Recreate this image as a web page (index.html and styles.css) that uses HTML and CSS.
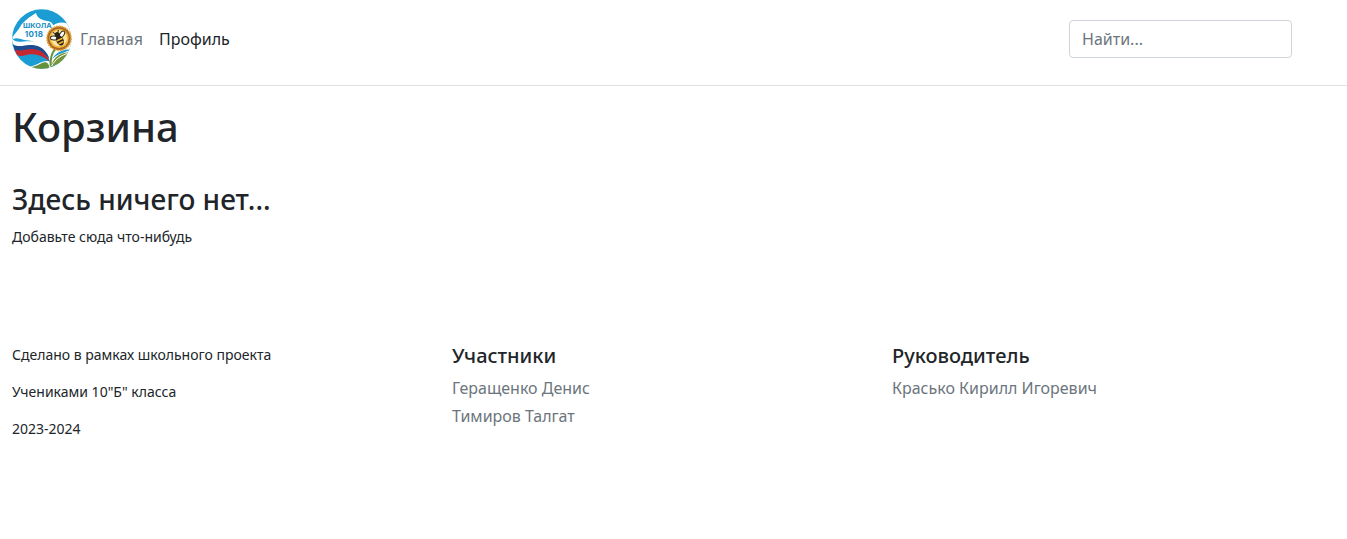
FILE: index.html
```html
<!DOCTYPE html>
<html lang="ru">
<head>
<meta charset="utf-8">
<title>Корзина</title>
<link rel="stylesheet" href="styles.css">
</head>
<body>
<header class="header">
  <a class="brand" href="#">
    <svg class="logo" viewBox="0 0 180 180" role="img" aria-label="Школа 1018">
      <defs><clipPath id="disc"><circle cx="89" cy="90" r="89"/></clipPath></defs>
      <g clip-path="url(#disc)">
        <rect width="180" height="180" fill="#1b9dd3"/>
        <path d="M0 86C12 70 22 60 29 46C42 31 56 22 72 12C76 28 90 34 108 36C116 38 121 42 124 49C138 38 152 39 168 44L180 60V128C158 134 136 146 117 172L111 150C109 122 78 96 43 94C26 92 15 84 4 90Z" fill="#fff"/>
        <path d="M0 88C12 106 34 94 58 97C91 99 106 118 113 145C95 118 74 107 51 109C28 112 14 122 0 99Z" fill="#fff"/>
        <path d="M4 108C28 116 38 106 61 108C88 110 103 125 112 149C95 130 75 122 54 123C34 124 22 133 8 122Z" fill="#1d4c91"/>
        <path d="M8 122C32 129 39 118 63 120C88 123 104 136 113 158C95 143 76 134 55 136C38 138 25 147 14 136Z" fill="#c72730"/>
        <path d="M50 174C78 168 92 151 112 157L119 180Z" fill="#fff"/>
        <path d="M58 174C82 171 89 158 102 160C111 164 112 172 111 180H56Z" fill="#66913c"/>
        <path d="M116 172C114 148 119 132 131 118" fill="none" stroke="#5e943c" stroke-width="6"/>
        <path d="M120 151C134 129 152 121 178 121C162 131 138 133 120 151Z" fill="#209ed0"/>
        <path d="M117 174C124 143 145 130 175 130C166 156 145 161 117 174Z" fill="#77963a"/>
        <path d="M119 171C131 148 148 139 170 132" fill="none" stroke="#fff" stroke-width="3"/>
      </g>
      <circle cx="141" cy="88" r="36" fill="#a66724"/>
      <circle cx="141" cy="88" r="36" fill="none" stroke="#e9a231" stroke-width="5" stroke-dasharray="5 3"/>
      <circle cx="141" cy="88" r="29" fill="#f5b83f"/>
      <circle cx="141" cy="88" r="24" fill="#fce7a2"/>
      <g transform="rotate(-25 141 88)">
        <ellipse cx="128" cy="81" rx="11" ry="6" transform="rotate(30 128 81)" fill="#fff" stroke="#302817" stroke-width="3"/>
        <ellipse cx="154" cy="81" rx="11" ry="6" transform="rotate(-30 154 81)" fill="#fff" stroke="#302817" stroke-width="3"/>
        <ellipse cx="141" cy="95" rx="11" ry="16" fill="#292319"/>
        <path d="M131 92H151M133 102H149" stroke="#f3b42e" stroke-width="5"/>
        <circle cx="141" cy="76" r="8" fill="#292319"/>
        <path d="M136 70L132 64M146 70L150 64" stroke="#292319" stroke-width="3"/>
      </g>
      <text class="logo-text" x="33" y="57" font-size="19" textLength="86" lengthAdjust="spacingAndGlyphs">ШКОЛА</text>
      <text class="logo-text" x="38" y="84" font-size="24" textLength="55" lengthAdjust="spacing">1018</text>
    </svg>
  </a>
  <nav class="nav">
    <a class="nav-link muted" href="#">Главная</a>
    <a class="nav-link" href="#">Профиль</a>
  </nav>
  <input class="search" type="search" placeholder="Найти...">
</header>
<main class="main">
  <h1 class="title">Корзина</h1>
  <h3 class="subtitle">Здесь ничего нет...</h3>
  <p class="hint"><small class="small">Добавьте сюда что-нибудь</small></p>
</main>
<footer class="footer">
  <div class="about">
    <p class="note">Сделано в рамках школьного проекта</p>
    <p class="note">Учениками 10"Б" класса</p>
    <p class="note">2023-2024</p>
  </div>
  <div>
    <h5 class="heading">Участники</h5>
    <ul class="list"><li>Геращенко Денис</li><li>Тимиров Талгат</li></ul>
  </div>
  <div>
    <h5 class="heading">Руководитель</h5>
    <ul class="list"><li>Красько Кирилл Игоревич</li></ul>
  </div>
</footer>
</body>
</html>
```
FILE: styles.css
```css
* { box-sizing: border-box; }
body { margin: 0; background: #fff; color: #212529; font: 16px/1.5 "Noto Sans", "Liberation Sans", sans-serif; }
h1, h3, h5, p, ul { margin: 0; }
.header { display: flex; align-items: center; height: 86px; padding: 9px 55px 16px 12px; border-bottom: 1px solid #dee2e6; }
.brand { display: block; height: 60px; }
.logo { display: block; width: 60px; height: 60px; }
.logo-text { font-family: Inter, "Noto Sans", sans-serif; font-weight: 700; fill: #168bc2; }
.nav { display: flex; flex: 1; }
.nav-link { padding: 0 8px; color: #212529; text-decoration: none; }
.muted { color: #6c757d; }
.search { width: 223px; height: 38px; padding: 6px 12px; border: 1px solid #ced4da; border-radius: 4px; background: #fff; color: #212529; font: inherit; appearance: none; }
.search::placeholder { color: #6c757d; opacity: 1; }
.main { padding: 17px 12px 0; }
.title { margin-bottom: 32px; font-size: 40px; font-weight: 500; line-height: 48px; }
.subtitle { margin-bottom: 7px; font-size: 28px; font-weight: 500; line-height: 1.2; }
.small { font-size: 14px; }
.footer { display: grid; grid-template-columns: repeat(3, 440px); padding: 96px 12px 0; }
.about { display: flex; flex-direction: column; gap: 16px; }
.note { font-size: 14px; line-height: 21px; }
.heading { margin-bottom: 8px; font-size: 20px; font-weight: 500; line-height: 24px; }
.list { display: flex; flex-direction: column; gap: 4px; padding: 0; list-style: none; color: #6c757d; }
```
